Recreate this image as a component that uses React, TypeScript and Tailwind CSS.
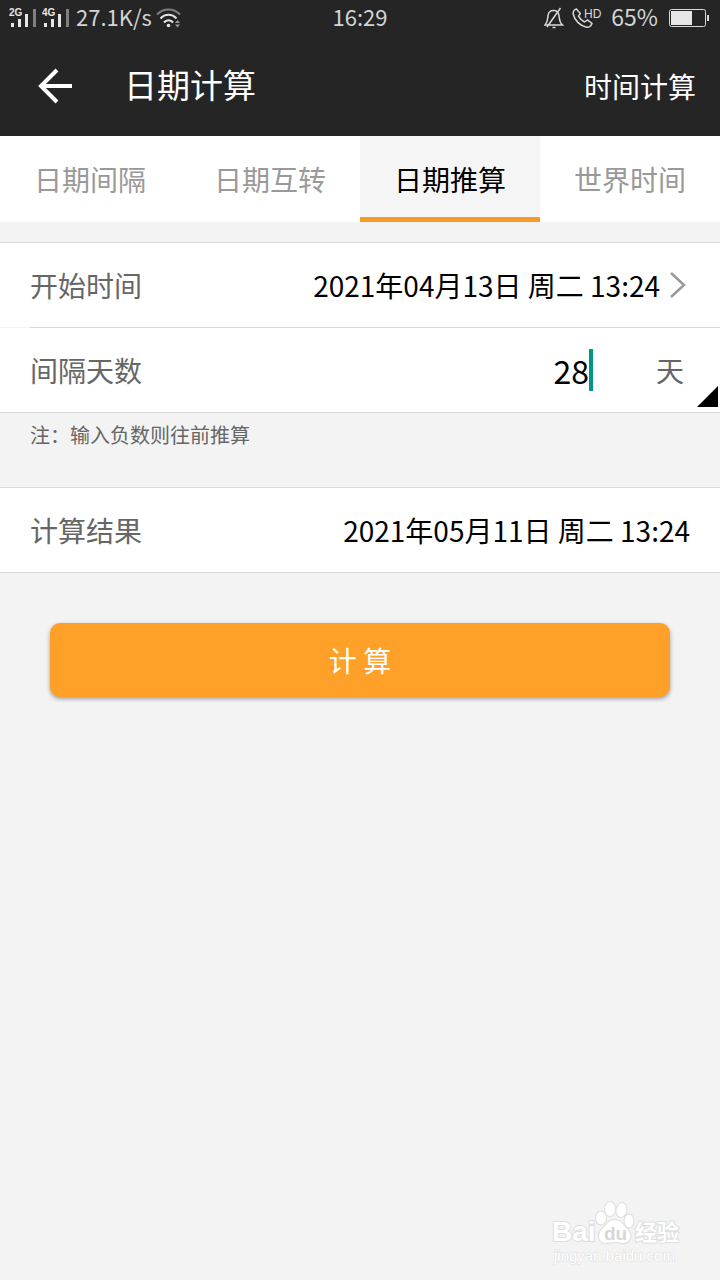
import { useState } from "react";

type Tab = {
  id: string;
  label: string;
};

const tabs: Tab[] = [
  { id: "interval", label: "日期间隔" },
  { id: "convert", label: "日期互转" },
  { id: "offset", label: "日期推算" },
  { id: "world", label: "世界时间" },
];

const WEEKDAYS = ["日", "一", "二", "三", "四", "五", "六"];
const START = new Date(2021, 3, 13, 13, 24);

const pad = (value: number) => String(value).padStart(2, "0");

function formatDate(date: Date) {
  const day = `${date.getFullYear()}年${pad(date.getMonth() + 1)}月${pad(date.getDate())}日`;
  return `${day} 周${WEEKDAYS[date.getDay()]} ${pad(date.getHours())}:${pad(date.getMinutes())}`;
}

function addDays(date: Date, days: number) {
  const next = new Date(date);
  next.setDate(next.getDate() + days);
  return next;
}

function SignalIcon({ label }: { label: string }) {
  return (
    <svg width="28" height="20" viewBox="0 0 28 20" fill="#e6e6e6">
      <text x="0" y="8" fontSize="10" fontWeight="700" fontFamily="Liberation Sans, sans-serif">
        {label}
      </text>
      <rect x="2" y="15" width="3" height="4" />
      <rect x="9" y="11" width="3" height="8" />
      <rect x="16" y="6" width="3" height="13" />
      <rect x="24" y="1" width="3" height="18" fill="#808080" />
    </svg>
  );
}

function WifiIcon() {
  return (
    <svg width="26" height="20" viewBox="0 0 26 20" fill="none" strokeWidth="2">
      <path d="M1 6.500C7.500-.200 17.500-.200 24 6.500" stroke="#808080" />
      <path d="M4.500 10.500C9 5.500 16 5.500 20.500 10.500" stroke="#e6e6e6" />
      <path d="M8 14.500C10.500 11.500 14.500 11.500 17 14.500" stroke="#e6e6e6" />
      <circle cx="12.500" cy="17.500" r="1.800" fill="#e6e6e6" />
      <path d="M19 15l2.500-3 2.500 3zM19 16.500l2.500 3 2.500-3z" fill="#999" />
    </svg>
  );
}

function MutedBellIcon() {
  return (
    <svg width="20" height="22" viewBox="0 0 20 22" fill="none" stroke="#d9d9d9" strokeWidth="1.500">
      <path d="M1 18C4 15 3.500 12 4 8.500C4.500 5 7 3.500 9.500 3.500S14.500 5 15 8.500C15.500 12 15 15 18.500 18Z" />
      <path d="M16.500 1L3 20M8.500 20.500h3" />
    </svg>
  );
}

function HdCallIcon() {
  return (
    <svg width="30" height="22" viewBox="0 0 30 22" fill="none" stroke="#d9d9d9" strokeWidth="1.500">
      <path d="M4.500 2C2.500 2.500.800 4.500 1.200 7C2.500 13.500 8.500 19 14.500 20.300C17 20.500 19 19 20 16.500L15.500 13L12.500 15C9.500 13.500 8 12 6.500 9.200L8.300 6.500Z" />
      <text x="12" y="11" fontSize="12" fill="#d9d9d9" stroke="none" fontFamily="Liberation Sans, sans-serif">
        HD
      </text>
    </svg>
  );
}

function BatteryIcon() {
  return (
    <svg width="42" height="18" viewBox="0 0 42 18" fill="none">
      <rect x=".500" y=".500" width="36" height="17" rx="2" stroke="#d9d9d9" />
      <rect x="2" y="2" width="21" height="14" fill="#e6e6e6" />
      <rect x="38" y="6" width="2" height="6" fill="#d9d9d9" />
    </svg>
  );
}

function StatusBar() {
  return (
    <div className="grid h-9 grid-cols-[1fr_auto_1fr] items-center px-[9px] text-[22px] leading-none text-[#d4d4d4]">
      <div className="flex items-center">
        <SignalIcon label="2G" />
        <span className="ml-[5px] flex">
          <SignalIcon label="4G" />
        </span>
        <span className="mr-1 ml-[6px] pb-1">27.1K/s</span>
        <WifiIcon />
      </div>
      <span className="pb-1">16:29</span>
      <div className="flex items-center justify-end">
        <MutedBellIcon />
        <span className="mr-[9px] ml-2">
          <HdCallIcon />
        </span>
        <span className="mr-[11px] pb-1 text-[23px]">65%</span>
        <BatteryIcon />
      </div>
    </div>
  );
}

function Watermark() {
  return (
    <svg
      className="absolute right-[36px] bottom-[12px]"
      width="132"
      height="68"
      viewBox="0 0 132 68"
      fill="#fff"
      stroke="#dedede"
      strokeWidth="2"
      paintOrder="stroke"
      fontFamily="Liberation Sans, Noto Sans CJK SC, sans-serif"
    >
      <text x="0" y="41" fontSize="28" fontWeight="700">
        Bai
      </text>
      <ellipse cx="49" cy="18" rx="5" ry="6.500" />
      <ellipse cx="58" cy="9" rx="5" ry="7" />
      <ellipse cx="69.500" cy="10" rx="5" ry="7" transform="rotate(12 69.500 10)" />
      <ellipse cx="77" cy="21" rx="4.500" ry="6.500" />
      <path d="M63 20C69 20 71 25 75 29C81 34 79 43 71 43C68 43 66 42 63 42S57 43 54 43C46 43 45 34 50 29C55 25 56 20 63 20Z" />
      <text x="52" y="40" fontSize="19" fontWeight="700" fill="#d6d6d6" stroke="none">
        du
      </text>
      <text x="83" y="40" fontSize="22" fontWeight="700">
        经验
      </text>
      <text x="2" y="61" fontSize="15" strokeWidth="1">
        jingyan.baidu.com
      </text>
    </svg>
  );
}

export default function App() {
  const [activeTab, setActiveTab] = useState("offset");
  const [days, setDays] = useState("28");
  const [result, setResult] = useState(() => formatDate(addDays(START, 28)));

  function handleSubmit(event: React.FormEvent<HTMLFormElement>) {
    event.preventDefault();
    setResult(formatDate(addDays(START, Number(days) || 0)));
  }

  return (
    <div className="relative flex min-h-screen flex-col bg-[#f3f3f3] font-['Noto_Sans_CJK_SC',sans-serif] text-[28px] leading-[40px]">
      <header className="bg-[#252525] text-white">
        <StatusBar />
        <div className="flex h-[100px] items-center pr-6 pl-[38px]">
          <button type="button" aria-label="返回">
            <svg width="36" height="36" viewBox="0 0 36 36" fill="none" stroke="#fff" strokeWidth="4">
              <path d="M19 2L3 18L19 34M3 18H34" />
            </svg>
          </button>
          <h1 className="ml-[50px] flex-1 pb-1 text-[33px]">日期计算</h1>
          <button type="button">时间计算</button>
        </div>
      </header>

      <nav className="grid grid-cols-4 bg-white">
        {tabs.map((tab) => (
          <button
            key={tab.id}
            type="button"
            aria-pressed={tab.id === activeTab}
            onClick={() => setActiveTab(tab.id)}
            className={
              tab.id === activeTab
                ? "h-[86px] border-b-[5px] border-[#f79a26] bg-[#f5f5f5] pt-1 text-black"
                : "h-[86px] border-b-[5px] border-transparent pt-1 text-[#999]"
            }
          >
            {tab.label}
          </button>
        ))}
      </nav>

      <form className="mt-5" onSubmit={handleSubmit}>
        <div className="relative border-y border-[#d9d9d9] bg-white">
          <button type="button" className="flex h-[84px] w-full items-center pr-[34px] pl-[30px]">
            <span className="text-[#666]">开始时间</span>
            <span className="ml-auto text-black">{formatDate(START)}</span>
            <svg className="ml-[9px]" width="17" height="26" viewBox="0 0 17 26" fill="none" stroke="#999" strokeWidth="2.500">
              <path d="M2 1L15 13L2 25" />
            </svg>
          </button>
          <div className="bg-[#f3f3f3] pl-[30px]">
            <div className="h-px bg-[#d9d9d9]" />
          </div>
          <div className="flex h-[84px] items-center pr-9 pl-[30px]">
            <label htmlFor="days" className="text-[#666]">
              间隔天数
            </label>
            <input
              id="days"
              inputMode="numeric"
              value={days}
              onChange={(event) => setDays(event.target.value)}
              className="min-w-0 flex-1 bg-transparent text-right text-[32px] text-black caret-transparent outline-none"
            />
            <span className="h-[42px] w-1 bg-[#009688]" />
            <span className="ml-[63px] text-[#666]">天</span>
          </div>
          <svg className="absolute right-[2px] bottom-[5px]" width="21" height="21" viewBox="0 0 21 21">
            <path d="M21 0V21H0Z" fill="#000" />
          </svg>
        </div>

        <p className="h-[74px] px-[30px] pt-[7px] text-[20px] leading-[30px] text-[#666]">注：输入负数则往前推算</p>

        <div className="flex h-[86px] items-center justify-between border-y border-[#d9d9d9] bg-white px-[30px]">
          <label htmlFor="result" className="text-[#666]">
            计算结果
          </label>
          <output id="result" className="text-black">
            {result}
          </output>
        </div>

        <div className="px-[50px] pt-[50px]">
          <button
            type="submit"
            className="h-[74px] w-full rounded-[10px] bg-[#ffa028] text-white shadow-[0_2px_4px_rgba(0,0,0,0.35)]"
          >
            计 算
          </button>
        </div>
      </form>

      <Watermark />
    </div>
  );
}
